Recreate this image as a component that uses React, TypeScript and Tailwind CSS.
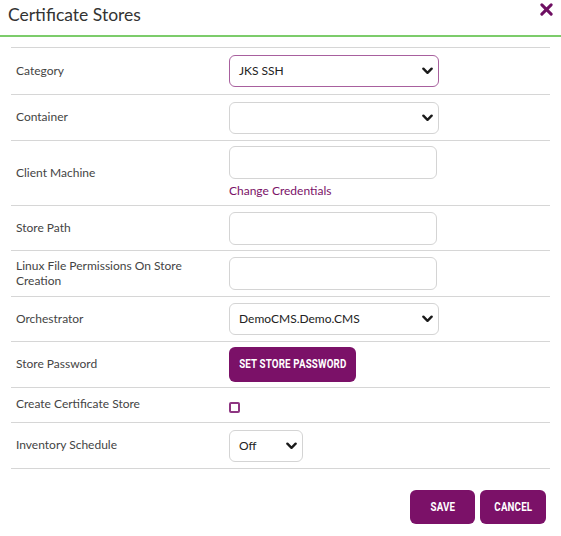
import type { ReactNode } from "react";

// ─── Small pieces ─────────────────────────────────────────────────────────────

function Chevron() {
    return (
        <svg
            viewBox="0 0 12 8"
            className="pointer-events-none absolute right-[6px] top-1/2 h-[8px] w-[11px] -translate-y-1/2"
        >
            <path d="M1.5 1.5 L6 6 L10.5 1.5" fill="none" stroke="#1a1a1a" strokeWidth="2.6" strokeLinecap="round" strokeLinejoin="round" />
        </svg>
    );
}

function Select({ value, width, active = false }: { value?: string; width: string; active?: boolean }) {
    return (
        <div className={["relative h-8", width].join(" ")}>
            <div
                className={[
                    "flex h-full w-full items-center rounded-[6px] border bg-white pl-[9px] text-[12px] text-[#222]",
                    active ? "border-[#a8609e]" : "border-[#d4d4d4]",
                ].join(" ")}
            >
                {value}
            </div>
            <Chevron />
        </div>
    );
}

function TextInput() {
    return <div className="h-[33px] w-[208px] rounded-[6px] border border-[#d4d4d4] bg-white" />;
}

function PurpleButton({ children, className = "" }: { children: ReactNode; className?: string }) {
    return (
        <button
            className={[
                "flex items-center justify-center rounded-[6px] bg-[#7b1168] text-white",
                className,
            ].join(" ")}
        >
            <span
                className="inline-block origin-center scale-x-[0.78] whitespace-nowrap text-[12.5px] font-bold uppercase tracking-[0.2px]"
                style={{ fontFamily: 'Roboto, "Liberation Sans", sans-serif' }}
            >
                {children}
            </span>
        </button>
    );
}

function Row({ label, children, className = "" }: { label: ReactNode; children: ReactNode; className?: string }) {
    return (
        <div className={["flex border-t border-[#d6d6d6]", className].join(" ")}>
            <div className="flex w-[218px] shrink-0 items-center pb-[2px] pl-[5px] pr-[30px] text-[12px] leading-[15px] text-[#444]">
                {label}
            </div>
            <div className="flex flex-1 items-center">{children}</div>
        </div>
    );
}

// ─── Dialog ───────────────────────────────────────────────────────────────────

export default function App() {
    return (
        <div className="h-[536px] w-[561px] bg-white" style={{ fontFamily: 'Lato, "Open Sans", sans-serif' }}>
            <div className="flex h-[35px] items-start justify-between pl-[8px] pr-[8px]">
                <h1 className="pt-[5px] text-[17.5px] leading-[20px] text-[#333]">Certificate Stores</h1>
                <svg viewBox="0 0 14 14" className="mt-[3px] h-[13px] w-[13px]">
                    <path d="M2 2 L12 12 M12 2 L2 12" stroke="#6e0f62" strokeWidth="3.2" strokeLinecap="round" />
                </svg>
            </div>
            <div className="h-[2px] bg-[#7ccc6b]" />

            <div className="mx-[11px] mt-[10px] border-b border-[#d6d6d6]">
                <Row label="Category" className="h-[47px]">
                    <Select value="JKS SSH" width="w-[210px]" active />
                </Row>
                <Row label="Container" className="h-[46px]">
                    <Select width="w-[210px]" />
                </Row>
                <Row label="Client Machine" className="h-[65px]">
                    <div className="flex flex-col self-start pt-[5px]">
                        <TextInput />
                        <span className="mt-[4px] text-[12px] leading-[15px] text-[#7b1168]">Change Credentials</span>
                    </div>
                </Row>
                <Row label="Store Path" className="h-[45px]">
                    <TextInput />
                </Row>
                <Row label="Linux File Permissions On Store Creation" className="h-[46px]">
                    <TextInput />
                </Row>
                <Row label="Orchestrator" className="h-[45px]">
                    <Select value="DemoCMS.Demo.CMS" width="w-[210px]" />
                </Row>
                <Row label="Store Password" className="h-[46px]">
                    <PurpleButton className="h-[35px] w-[127px]">Set Store Password</PurpleButton>
                </Row>
                <Row label={<span className="-mt-[2px]">Create Certificate Store</span>} className="h-[35px]">
                    <span className="mt-[5px] block h-[11px] w-[11px] rounded-[2px] border-2 border-[#8e3582] bg-white" />
                </Row>
                <Row label="Inventory Schedule" className="h-[46px]">
                    <Select value="Off" width="w-[74px]" />
                </Row>
            </div>

            <div className="mt-[21px] flex justify-end gap-[5px] pr-[15px]">
                <PurpleButton className="h-[34px] w-[65px]">Save</PurpleButton>
                <PurpleButton className="h-[34px] w-[66px]">Cancel</PurpleButton>
            </div>
        </div>
    );
}
